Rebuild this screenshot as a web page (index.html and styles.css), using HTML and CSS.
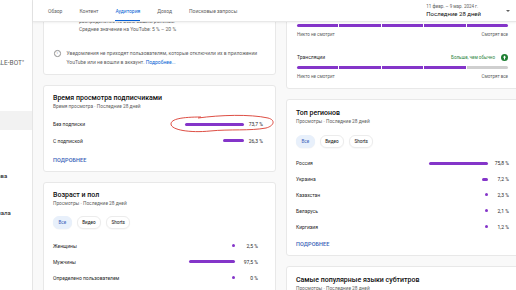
FILE: index.html
```html
<!DOCTYPE html>
<html lang="ru">
<head>
    <meta charset="UTF-8">
    <meta name="viewport" content="width=device-width, initial-scale=1.0">
    <title>Аналитика канала - Аудитория</title>
    <link rel="stylesheet" href="styles.css">
</head>
<body>

    <div class="sidebar">
        <div class="sidebarInner">
            <div class="channelName">Чат-бот "SALE-BOT"</div>
            <a href="#">Главная</a>
            <a href="#">Контент</a>
            <a href="#" class="active">Аналитика</a>
            <a href="#">Сообщество</a>
            <a href="#">Субтитры</a>
            <a href="#">Авторские права</a>
            <a href="#">Монетизация</a>
            <a href="#">Настройка канала</a>
            <a href="#">Фонотека</a>
        </div>
    </div>

    <div class="main">
        <div class="topBar">
            <div class="tabs">
                <a href="#">Обзор</a>
                <a href="#">Контент</a>
                <a href="#" class="current">Аудитория</a>
                <a href="#">Доход</a>
                <a href="#">Поисковые запросы</a>
            </div>
            <div class="period">
                <span class="periodDates">11 февр. – 9 мар. 2024 г.</span>
                <span class="periodName">Последние 28 дней</span>
            </div>
            <span class="periodCaret"></span>
        </div>

        <div class="content">
            <div class="columns">

                <!-- Левая колонка -->
                <div class="column leftColumn">
                    <div class="card noteCard">
                        <p class="noteText">распределение по всем вашим роликам</p>
                        <p class="noteText">Среднее значение на YouTube: 5 % – 20 %</p>
                        <div class="infoRow">
                            <span class="infoIcon">i</span>
                            <p>Уведомления не приходят пользователям, которые отключили их в приложении YouTube или не вошли в аккаунт. <a href="#">Подробнее...</a></p>
                        </div>
                    </div>

                    <div class="card subsCard">
                        <h3>Время просмотра подписчиками</h3>
                        <p class="cardSub">Время просмотра · Последние 28 дней</p>
                        <div class="rows">
                            <div class="row marked">
                                <span class="rowLabel">Без подписки</span>
                                <span class="track"><span class="bar" style="width: 73.7%"></span></span>
                                <span class="pct">73,7 %</span>
                                <svg class="scribble" width="108" height="22" viewBox="0 0 108 22">
                                    <path d="M30 4 C52 1 82 0 100 4 C108 6 106 12 98 14 C82 17 62 15 42 17 C22 19 3 16 3 10 C3 5 14 3 33 3" fill="none" stroke="#d93a2f" stroke-width="0.9"/>
                                </svg>
                            </div>
                            <div class="row">
                                <span class="rowLabel">С подпиской</span>
                                <span class="track"><span class="bar" style="width: 26.3%"></span></span>
                                <span class="pct">26,3 %</span>
                            </div>
                        </div>
                        <a href="#" class="moreLink">ПОДРОБНЕЕ</a>
                    </div>

                    <div class="card ageCard">
                        <h3>Возраст и пол</h3>
                        <p class="cardSub">Просмотры · Последние 28 дней</p>
                        <div class="chips">
                            <span class="chip selected">Все</span>
                            <span class="chip">Видео</span>
                            <span class="chip">Shorts</span>
                        </div>
                        <div class="rows">
                            <div class="row">
                                <span class="rowLabel">Женщины</span>
                                <span class="track"><span class="bar" style="width: 2.5%"></span></span>
                                <span class="pct">2,5 %</span>
                            </div>
                            <div class="row">
                                <span class="rowLabel">Мужчины</span>
                                <span class="track"><span class="bar" style="width: 97.5%"></span></span>
                                <span class="pct">97,5 %</span>
                            </div>
                            <div class="row">
                                <span class="rowLabel">Определено пользователем</span>
                                <span class="track"><span class="bar" style="width: 0%"></span></span>
                                <span class="pct">0 %</span>
                            </div>
                        </div>
                    </div>
                </div>

                <!-- Правая колонка -->
                <div class="column rightColumn">
                    <div class="card scaleCard">
                        <div class="scaleBlock">
                            <div class="scaleHead">
                                <span>Видео</span>
                            </div>
                            <div class="segments">
                                <span class="seg on"></span><span class="seg on"></span><span class="seg on"></span><span class="seg on"></span><span class="seg on"></span>
                            </div>
                            <div class="scaleEnds"><span>Никто не смотрит</span><span>Смотрят все</span></div>
                        </div>
                        <div class="scaleBlock">
                            <div class="scaleHead">
                                <span>Трансляции</span>
                                <span class="trend">Больше, чем обычно
                                    <svg class="trendIcon" width="7" height="7" viewBox="0 0 14 14">
                                        <circle cx="7" cy="7" r="7" fill="#1e7f32"/>
                                        <path d="M7 3.2 L10.2 6.8 H8.1 V10.8 H5.9 V6.8 H3.8 Z" fill="#fff"/>
                                    </svg>
                                </span>
                            </div>
                            <div class="segments">
                                <span class="seg on"></span><span class="seg on"></span><span class="seg on"></span><span class="seg on"></span><span class="seg"></span>
                            </div>
                            <div class="scaleEnds"><span>Никто не смотрит</span><span>Смотрят все</span></div>
                        </div>
                    </div>

                    <div class="card regionCard">
                        <h3>Топ регионов</h3>
                        <p class="cardSub">Просмотры · Последние 28 дней</p>
                        <div class="chips">
                            <span class="chip selected">Все</span>
                            <span class="chip">Видео</span>
                            <span class="chip">Shorts</span>
                        </div>
                        <div class="rows">
                            <div class="row">
                                <span class="rowLabel">Россия</span>
                                <span class="track"><span class="bar" style="width: 75.8%"></span></span>
                                <span class="pct">75,8 %</span>
                            </div>
                            <div class="row">
                                <span class="rowLabel">Украина</span>
                                <span class="track"><span class="bar" style="width: 7.2%"></span></span>
                                <span class="pct">7,2 %</span>
                            </div>
                            <div class="row">
                                <span class="rowLabel">Казахстан</span>
                                <span class="track"><span class="bar" style="width: 2.3%"></span></span>
                                <span class="pct">2,3 %</span>
                            </div>
                            <div class="row">
                                <span class="rowLabel">Беларусь</span>
                                <span class="track"><span class="bar" style="width: 2.1%"></span></span>
                                <span class="pct">2,1 %</span>
                            </div>
                            <div class="row">
                                <span class="rowLabel">Киргизия</span>
                                <span class="track"><span class="bar" style="width: 1.2%"></span></span>
                                <span class="pct">1,2 %</span>
                            </div>
                        </div>
                        <a href="#" class="moreLink">ПОДРОБНЕЕ</a>
                    </div>

                    <div class="card langCard">
                        <h3>Самые популярные языки субтитров</h3>
                        <p class="cardSub">Просмотры · Последние 28 дней</p>
                    </div>
                </div>

            </div>
        </div>
    </div>

</body>
</html>
```

FILE: styles.css
```css
body {
    margin: 0;
    font-family: Roboto, "Noto Sans", Arial, sans-serif;
    background-color: #f9f9f9;
    color: #0d0d0d;
    display: flex;
    height: 290px;
    overflow: hidden;
}

p {
    margin: 0;
}

/* Боковая панель */
.sidebar {
    width: 32px;
    flex-shrink: 0;
    background-color: #fff;
    border-right: 1px solid #e5e5e5;
    overflow: hidden;
}

.sidebarInner {
    width: 92px;
    margin-left: -60px;
    padding-top: 59px;
    display: flex;
    flex-direction: column;
}

.channelName {
    text-align: right;
    padding-right: 8px;
    font-size: 6.5px;
    line-height: 8px;
    color: #606060;
    margin-bottom: 7px;
    white-space: nowrap;
}

.sidebarInner a {
    text-decoration: none;
    color: #0d0d0d;
    font-size: 6px;
    height: 18.6px;
    line-height: 18.6px;
    padding-left: 19px;
    white-space: nowrap;
}

.sidebarInner a.active {
    background-color: #f2f2f2;
}

/* Верхняя панель */
.main {
    flex-grow: 1;
    display: flex;
    flex-direction: column;
    min-width: 0;
}

.topBar {
    height: 21px;
    background-color: #fff;
    border-bottom: 1px solid #e8e8e8;
    box-shadow: 0 1px 2px rgba(0, 0, 0, 0.06);
    display: flex;
    align-items: center;
    padding-left: 15px;
    flex-shrink: 0;
    position: relative;
    z-index: 1;
}

.tabs {
    display: flex;
    gap: 17px;
    height: 100%;
}

.tabs a {
    text-decoration: none;
    color: #606060;
    font-size: 5px;
    display: flex;
    align-items: center;
    padding-top: 2px;
    border-bottom: 1.5px solid transparent;
    box-sizing: border-box;
}

.tabs a.current {
    color: #065fd4;
    border-bottom-color: #065fd4;
}

.period {
    margin-left: auto;
    display: flex;
    flex-direction: column;
    margin-top: -1px;
}

.periodDates {
    font-size: 4.5px;
    line-height: 7px;
    color: #606060;
}

.periodName {
    font-size: 6px;
    line-height: 8px;
    color: #0d0d0d;
}

.periodCaret {
    margin-left: 25px;
    margin-right: 6px;
    width: 0;
    height: 0;
    border-left: 2px solid transparent;
    border-right: 2px solid transparent;
    border-top: 2.5px solid #606060;
}

/* Основное содержимое */
.content {
    flex-grow: 1;
    overflow: hidden;
    padding-left: 10px;
}

.columns {
    display: flex;
    gap: 10px;
    margin-top: -21px;
}

.column {
    flex-shrink: 0;
    display: flex;
    flex-direction: column;
    gap: 10px;
}

.leftColumn {
    width: 233px;
}

.rightColumn {
    width: 240px;
}

.card {
    background-color: #fff;
    border: 1px solid #e8e8e8;
    border-radius: 3px;
    padding: 7px 12px 7px 9px;
}

.card h3 {
    margin: 0;
    font-size: 7px;
    font-weight: 500;
    line-height: 10px;
}

.cardSub {
    font-size: 4.8px;
    line-height: 7px;
    color: #606060;
}

/* Уведомления */
.noteCard {
    padding-top: 15px;
}

.noteText {
    font-size: 5px;
    line-height: 8px;
    color: #606060;
    padding-left: 26px;
}

.infoRow {
    display: flex;
    gap: 6px;
    margin-top: 15.5px;
    align-items: flex-start;
}

.infoRow p {
    font-size: 5px;
    line-height: 9px;
    color: #606060;
    width: 200px;
}

.infoRow a {
    color: #065fd4;
    text-decoration: none;
}

.infoIcon {
    width: 4.5px;
    height: 4.5px;
    border: 0.7px solid #909090;
    border-radius: 50%;
    font-size: 4px;
    line-height: 4.5px;
    text-align: center;
    color: #909090;
    margin-top: 1.5px;
    margin-left: 1px;
    flex-shrink: 0;
}

/* Строки со столбиками */
.rows {
    display: flex;
    flex-direction: column;
}

.row {
    display: flex;
    align-items: center;
    height: 16.5px;
    font-size: 5px;
    gap: 4px;
}

.row.marked {
    position: relative;
}

.rowLabel {
    flex-grow: 1;
    color: #282828;
}

.track {
    display: flex;
    justify-content: flex-end;
}

.bar {
    display: block;
    height: 3px;
    min-width: 3px;
    background-color: #8435c9;
    border-radius: 2px;
}

.pct {
    width: 15px;
    text-align: right;
    color: #282828;
    white-space: nowrap;
}

.subsCard .rows {
    margin-top: 6.5px;
}

.subsCard .track {
    width: 80px;
}

.ageCard .rows {
    margin-top: 9px;
    padding-right: 5px;
}

.ageCard .row {
    height: 16px;
    gap: 5px;
}

.ageCard .track {
    width: 47px;
}

.ageCard .pct {
    width: 18px;
}

.regionCard {
    padding-right: 16px;
    padding-top: 8px;
}

.regionCard .rows {
    margin-top: 8px;
}

.regionCard .row {
    height: 15.8px;
}

.regionCard .track {
    width: 78px;
}

.regionCard .pct {
    width: 17px;
}

.moreLink {
    display: block;
    margin-top: 6.5px;
    font-size: 5.5px;
    line-height: 8px;
    font-weight: 500;
    color: #3a5fb8;
    text-decoration: none;
    letter-spacing: 0.1px;
}

.regionCard .moreLink {
    margin-top: 6px;
}

/* Пометка красным от руки */
.scribble {
    position: absolute;
    right: -13px;
    top: -2.5px;
}

/* Фильтры */
.chips {
    display: flex;
    gap: 5px;
    margin-top: 9px;
}

.regionCard .chips {
    margin-top: 10px;
}

.chip {
    height: 11px;
    line-height: 11px;
    padding: 0 4.5px;
    font-size: 4.6px;
    border-radius: 6px;
    border: 0.5px solid #ececec;
    color: #0d0d0d;
    box-shadow: 0 0.5px 1px rgba(0, 0, 0, 0.05);
}

.chip.selected {
    background-color: #e8f0fb;
    border-color: #e8f0fb;
    color: #3a5fb8;
}

/* Шкалы интереса */
.scaleCard {
    padding: 9px 17px 8px 10px;
}

.scaleBlock + .scaleBlock {
    margin-top: 15.5px;
}

.scaleHead {
    display: flex;
    justify-content: space-between;
    align-items: center;
    height: 8px;
    font-size: 5px;
    color: #282828;
}

.trend {
    display: flex;
    align-items: center;
    gap: 6px;
    font-size: 4.5px;
    color: #2e8540;
}

.segments {
    display: flex;
    gap: 1px;
    margin-top: 4.5px;
}

.seg {
    flex: 1;
    height: 3px;
    background-color: #cfcfcf;
}

.seg.on {
    background-color: #8435c9;
}

.seg:first-child {
    border-radius: 2px 0 0 2px;
}

.seg:last-child {
    border-radius: 0 2px 2px 0;
}

.scaleEnds {
    display: flex;
    justify-content: space-between;
    margin-top: 4px;
    font-size: 4.5px;
    line-height: 7px;
    color: #606060;
}

.langCard {
    padding-top: 8px;
    padding-bottom: 20px;
}
```
